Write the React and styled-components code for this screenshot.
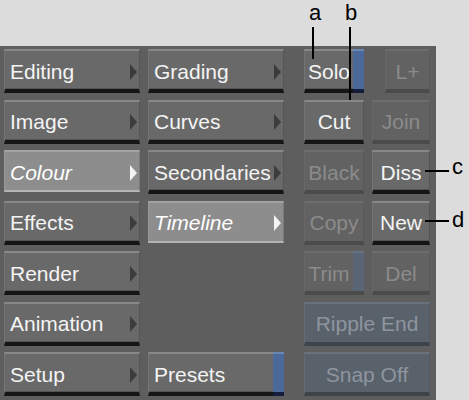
import React from 'react';
import styled, { createGlobalStyle, css } from 'styled-components';

const GlobalStyle = createGlobalStyle`
	html, body {
		margin: 0;
		padding: 0;
		background: #dcdcdc;
	}
`;

const FONT = `"Liberation Sans", Arial, sans-serif`;

const looks = {
	normal: css`
		background: #696969;
		color: #f4f4f4;
		border-top: 2px solid #888888;
		border-left: 1px solid #747474;
		border-right: 1px solid #555555;
		border-bottom: 4px solid #151515;
		box-shadow: inset 0 -1px 0 #545454;
	`,
	selected: css`
		height: 42px;
		background: #8d8d8d;
		color: #ffffff;
		border-top: 2px solid #a2a2a2;
		border-left: 1px solid #9a9a9a;
		border-right: 1px solid #7a7a7a;
		border-bottom: 2px solid #b4b4b4;
		font-style: italic;
	`,
	disabled: css`
		background: #626262;
		color: #8b8b8b;
		border-top: 2px solid #6d6d6d;
		border-left: 1px solid #676767;
		border-right: 1px solid #5a5a5a;
		border-bottom: 4px solid #4b4b4b;
	`,
	slate: css`
		background: #59616b;
		color: #8e959f;
		border-top: 2px solid #69717c;
		border-left: 1px solid #626a74;
		border-right: 1px solid #535a63;
		border-bottom: 4px solid #3f444b;
	`,
};

const Page = styled.div`
	position: relative;
	width: 469px;
	height: 400px;
	overflow: hidden;
	background: #dcdcdc;
	font-family: ${FONT};
`;

const Panel = styled.div`
	margin-top: 46px;
	width: 436px;
	height: 354px;
	box-sizing: border-box;
	padding: 3px 0 0 4px;
	background: #5e5e5e;
	display: flex;
	gap: 8px;
`;

const Column = styled.div`
	width: 136px;
	display: grid;
	grid-template-rows: repeat(7, 44px);
	row-gap: 6.5px;
`;

const EditGrid = styled.div`
	margin-left: 12px;
	display: grid;
	grid-template-columns: 60px 58px;
	grid-template-rows: repeat(7, 44px);
	column-gap: 8px;
	row-gap: 6.5px;
`;

const Key = styled.div`
	box-sizing: border-box;
	height: 44px;
	display: flex;
	align-items: center;
	justify-content: ${p => (p.$menu ? 'space-between' : 'center')};
	padding: ${p => (p.$menu ? '3px 2px 0 5px' : '3px 0 0')};
	font-size: 21px;
	white-space: nowrap;
	grid-row: ${p => p.$row || 'auto'};
	grid-column: ${p => (p.$span ? '1 / span 2' : 'auto')};
	${p => p.$inset && `margin-left: ${p.$inset}px;`}
	${p => looks[p.$look || 'normal']}
`;

const Arrow = styled.span`
	width: 0;
	height: 0;
	border-top: 8px solid transparent;
	border-bottom: 8px solid transparent;
	border-left: 7px solid ${p => (p.$light ? '#f4f4f4' : '#3c3c3c')};
`;

const Split = styled.div`
	display: flex;
	height: 44px;
	grid-row: ${p => p.$row || 'auto'};
	${Key} {
		flex: 1;
		border-right: none;
	}
`;

const Tab = styled.div`
	box-sizing: border-box;
	width: 11px;
	height: 44px;
	${p =>
		p.$dim
			? css`
					background: #5a6577;
					border-top: 2px solid #667184;
					border-bottom: 4px solid #4b4b4b;
			  `
			: css`
					background: #4b6a9b;
					border-top: 2px solid #6a87b3;
					border-bottom: 4px solid #151c3c;
			  `}
`;

const Letter = styled.div`
	position: absolute;
	left: ${p => p.$x}px;
	top: ${p => p.$y}px;
	font-size: 22px;
	line-height: 22px;
	color: #000;
`;

const Leader = styled.div`
	position: absolute;
	left: ${p => p.$x}px;
	top: ${p => p.$y}px;
	width: ${p => p.$w}px;
	height: ${p => p.$h}px;
	background: #000;
`;

const MenuKey = ({ label, look, row }) => (
	<Key $menu $look={look} $row={row}>
		<span>{label}</span>
		<Arrow $light={look === 'selected'} />
	</Key>
);

const mainMenu = [
	{ label: 'Editing' },
	{ label: 'Image' },
	{ label: 'Colour', look: 'selected' },
	{ label: 'Effects' },
	{ label: 'Render' },
	{ label: 'Animation' },
	{ label: 'Setup' },
];

const subMenu = [
	{ label: 'Grading' },
	{ label: 'Curves' },
	{ label: 'Secondaries' },
	{ label: 'Timeline', look: 'selected' },
];

const App = () => (
	<Page>
		<GlobalStyle />
		<Panel>
			<Column>
				{mainMenu.map(m => (
					<MenuKey key={m.label} label={m.label} look={m.look} />
				))}
			</Column>
			<Column>
				{subMenu.map(m => (
					<MenuKey key={m.label} label={m.label} look={m.look} />
				))}
				<Split $row={7}>
					<Key $menu>
						<span>Presets</span>
					</Key>
					<Tab />
				</Split>
			</Column>
			<EditGrid>
				<Split>
					<Key>Solo</Key>
					<Tab />
				</Split>
				<Key $look="disabled" $inset={13}>L+</Key>
				<Key>Cut</Key>
				<Key $look="disabled">Join</Key>
				<Key $look="disabled">Black</Key>
				<Key>Diss</Key>
				<Key $look="disabled">Copy</Key>
				<Key>New</Key>
				<Split>
					<Key $look="disabled">Trim</Key>
					<Tab $dim />
				</Split>
				<Key $look="disabled">Del</Key>
				<Key $look="slate" $span>Ripple End</Key>
				<Key $look="slate" $span>Snap Off</Key>
			</EditGrid>
		</Panel>

		<Letter $x={309} $y={2}>a</Letter>
		<Leader $x={312} $y={27} $w={2} $h={32} />
		<Letter $x={345} $y={2}>b</Letter>
		<Leader $x={349} $y={27} $w={2} $h={73} />
		<Leader $x={425} $y={170} $w={24} $h={2} />
		<Letter $x={452} $y={156}>c</Letter>
		<Leader $x={425} $y={220} $w={24} $h={2} />
		<Letter $x={452} $y={209}>d</Letter>
	</Page>
);

export default App;
